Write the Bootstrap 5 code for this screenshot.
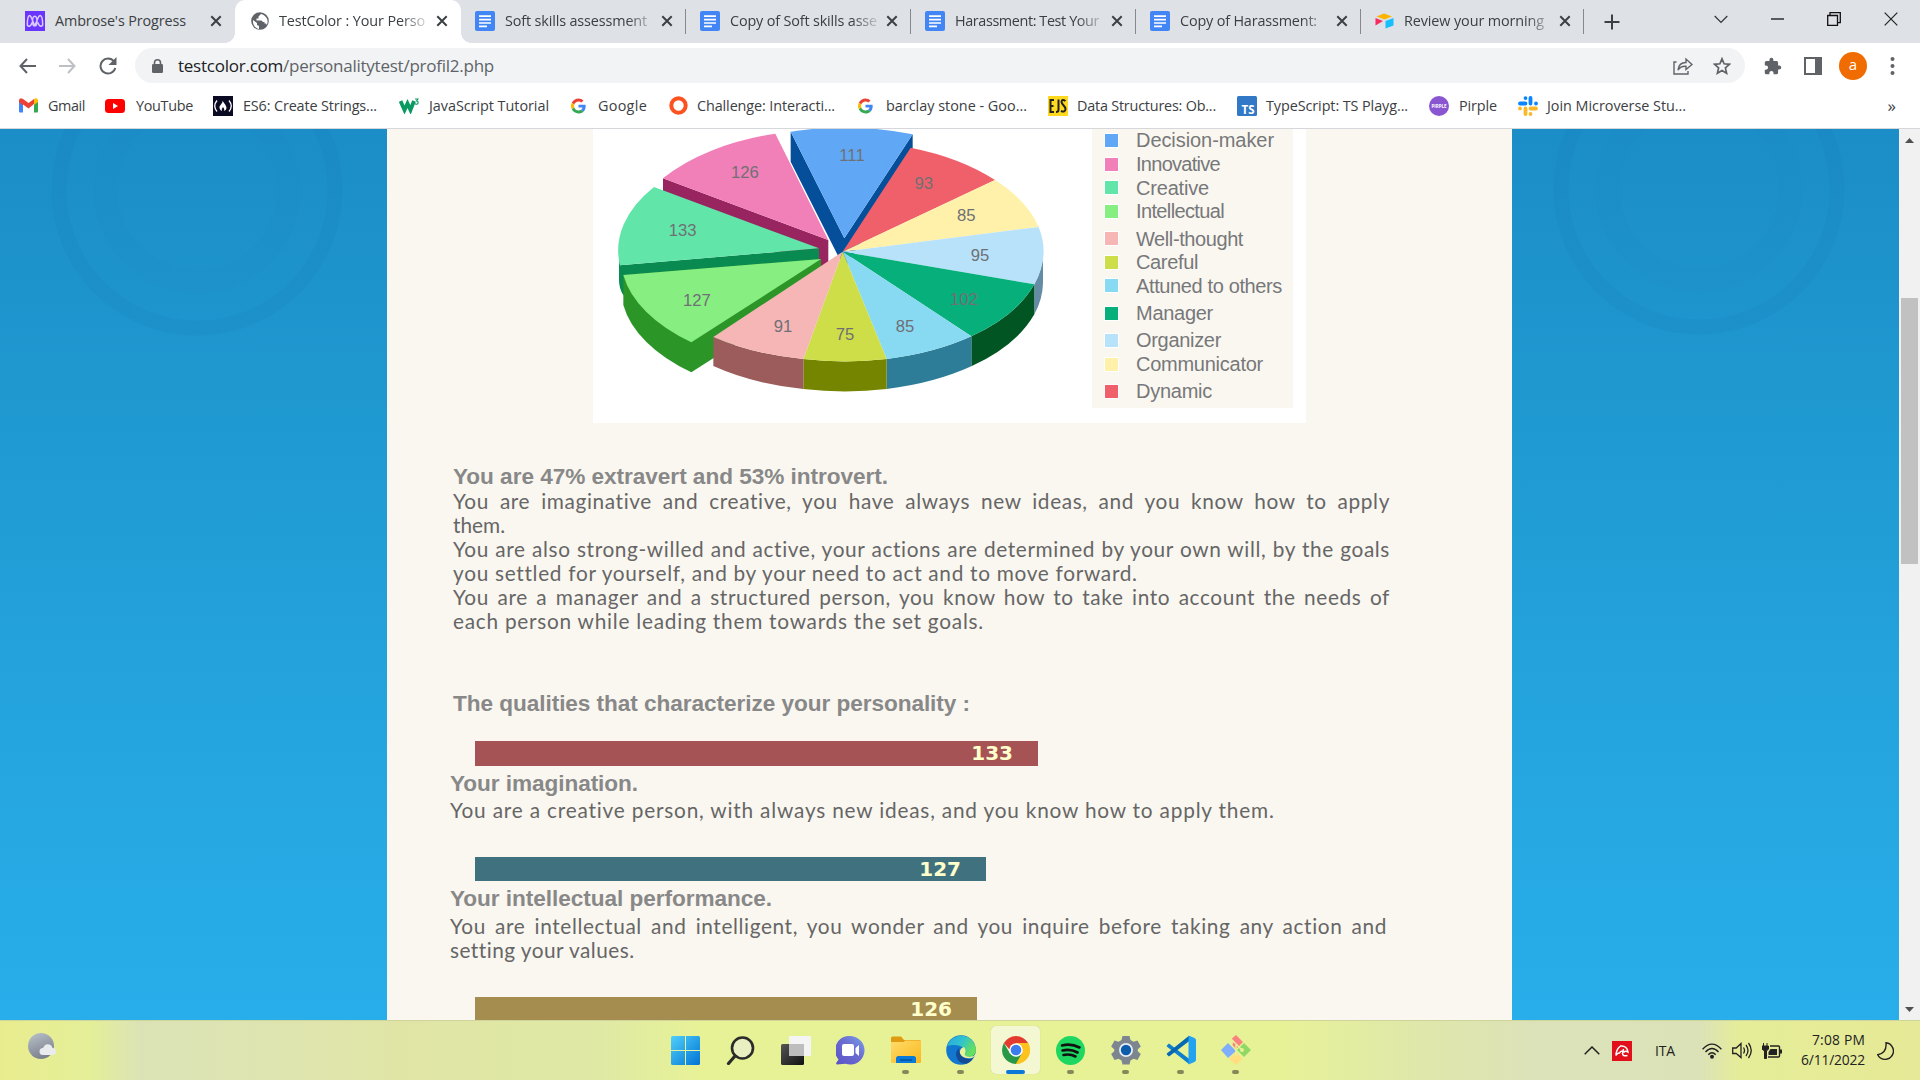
<!DOCTYPE html>
<html lang="en">
<head>
<meta charset="utf-8">
<title>TestColor : Your Personality</title>
<link href="https://cdn.jsdelivr.net/npm/bootstrap@5.3.0/dist/css/bootstrap.min.css" rel="stylesheet">
<style>
html,body{height:100%;overflow:hidden}
body{font-family:"Segoe UI","Open Sans",sans-serif;font-size:14.4px;color:#3c4043;line-height:20px}
svg{display:block;flex:none}
[data-fit]{white-space:nowrap;display:inline-block}
.tabstrip{height:43px;background:#dee1e6}
.tab{height:43px;padding:0 13px 1px 14px;width:225px;flex:none;position:relative}
.tab .ttl{flex:1;white-space:nowrap;margin-left:10px}
.tab .fade-end{-webkit-mask-image:linear-gradient(90deg,#000 122px,rgba(0,0,0,.15) 148px)}
.tab.first{width:235px;padding-left:25px}
.tab.last{width:223px}
.tab.sep::after{content:"";position:absolute;right:0;top:9px;height:25px;width:1px;background:#85898f}
.tab.active{background:#fff;border-radius:10px 10px 0 0;width:226px;padding-left:16px}
.tab.active::before,.tab.active::after{content:"";position:absolute;bottom:0;width:10px;height:10px}
.tab.active::before{left:-10px;background:radial-gradient(circle at 0 0,transparent 9.5px,#fff 10px)}
.tab.active::after{right:-10px;background:radial-gradient(circle at 100% 0,transparent 9.5px,#fff 10px)}
.toolbar{height:45px}
.omni{height:35px;background:#f1f3f4;border-radius:18px;margin-left:18px;width:1610px;padding:0 13px 0 17px;flex:none;font-size:17px;color:#5f6368}
.omni b{font-weight:400;color:#202124}
.avatar{width:28px;height:28px;border-radius:50%;background:#f06c00;color:#fff;font-size:15px}
.bookmarks{height:41px;border-bottom:1px solid #d5d7da;padding-left:19px;padding-bottom:5px}
.bm{flex:none}
.viewport{height:891px}
.sky{background:
 radial-gradient(circle at 197px 61px,transparent 79px,rgba(20,120,180,.06) 80px,rgba(20,120,180,.06) 103px,transparent 104px),
 radial-gradient(circle at 197px 61px,transparent 130px,rgba(20,120,180,.15) 131px,rgba(20,120,180,.15) 145px,transparent 146px),
 radial-gradient(circle at 1699px 60px,transparent 79px,rgba(20,120,180,.06) 80px,rgba(20,120,180,.06) 103px,transparent 104px),
 radial-gradient(circle at 1699px 60px,transparent 130px,rgba(20,120,180,.15) 131px,rgba(20,120,180,.15) 145px,transparent 146px),
 linear-gradient(#1b8dc7,#1f98d0 30%,#25a6e0 72%,#28aeea)}
.sheet{width:1125px;margin-left:387px;background:#faf7f0;height:891px;overflow:hidden}
.chart{width:713px;height:294px;margin-left:206px;background:#fff}
.chart text{font-family:"Liberation Sans",sans-serif;font-size:50px;fill:#6f7075;text-anchor:middle}
.legend{width:201px;height:279px;background:#faf7f0;margin-right:13px;padding-left:12px;font:20px/24px "Liberation Sans",sans-serif;color:#77787a}
.legend div{height:23.7px}
.legend div:first-child{margin-top:-.5px}
.legend i{width:15px;height:15px;border:1px solid #fff;margin-right:17px;flex:none}
.legend .gap{margin-top:3.5px}
.hd{font:bold 22.6px/27px "Liberation Sans",sans-serif;color:#888;margin:0;height:26px}
.txt{font-family:"Century Gothic","Lato",sans-serif;font-size:20.8px;line-height:24px;color:#666;font-weight:400}
.txt span{display:block;height:24px;white-space:nowrap;width:max-content}
.txt .just{width:auto;text-align:justify;text-align-last:justify;letter-spacing:.62px}
.meter{margin-left:25px;font:bold 20px/25px "DejaVu Sans",sans-serif;color:#ffc;padding-right:25px;text-align:right}
.track{width:21px;background:#f1f1f1}
.thumb{width:17px;height:266px;background:#c1c1c1}
.taskbar{height:60px;border-top:1px solid #cfd49b;color:#222;background:linear-gradient(90deg,#e9ec8e 0,#e4ef98 90px,#dbe3b6 140px,#dee4b2 240px,#e0e5a6 400px,#dfe9a4 600px,#e7f297 700px,#e7f297 1280px,#dfe7aa 1420px,#dce2b9 1540px,#dce2b8 1700px,#e5ed98 1740px,#e6e997 1920px)}
.app{width:49px;height:48px;border-radius:5px;position:relative;margin-right:6px}
.app.run::after{content:"";position:absolute;bottom:0;left:21px;width:7px;height:4px;border-radius:2px;background:#85895a}
.app.on{background:#f4f8d2;box-shadow:0 0 1px #b9bd90}
.app.on::after{left:15px;width:19px;background:#0a78d6}
</style>
<script src="https://cdn.jsdelivr.net/npm/bootstrap@5.3.0/dist/js/bootstrap.bundle.min.js"></script>
</head>
<body>
<svg width="0" height="0" class="position-absolute">
<defs>
<symbol id="doc" viewBox="0 0 20 20"><rect width="20" height="20" rx="2" fill="#4285f4"/><path d="M4 5.2h12M4 8.6h12M4 12h12M4 15.4h8" stroke="#fff" stroke-width="1.7"/></symbol>
<symbol id="x" viewBox="0 0 12 12"><path d="M1.3 1.3l9.4 9.4M10.7 1.3l-9.4 9.4" stroke="#3c4043" stroke-width="2"/></symbol>
<symbol id="goo" viewBox="0 0 48 48"><path fill="#ea4335" d="M24 9.5c3.54 0 6.71 1.22 9.21 3.6l6.85-6.85C35.9 2.38 30.47 0 24 0 14.62 0 6.51 5.38 2.56 13.22l7.98 6.19C12.43 13.72 17.74 9.5 24 9.5z"/><path fill="#4285f4" d="M46.98 24.55c0-1.57-.15-3.09-.38-4.55H24v9.02h12.94c-.58 2.96-2.26 5.48-4.78 7.18l7.73 6c4.51-4.18 7.09-10.36 7.09-17.65z"/><path fill="#fbbc05" d="M10.53 28.59a14.5 14.5 0 0 1 0-9.18l-7.98-6.19a24 24 0 0 0 0 21.56z"/><path fill="#34a853" d="M24 48c6.48 0 11.93-2.13 15.89-5.81l-7.73-6c-2.15 1.45-4.92 2.3-8.16 2.3-6.26 0-11.57-4.22-13.47-9.91l-7.98 6.19C6.51 42.62 14.62 48 24 48z"/></symbol>
<linearGradient id="gw" x2="1" y2="1"><stop stop-color="#4fd0fb"/><stop offset="1" stop-color="#0273d4"/></linearGradient>
<linearGradient id="gb" x2="1" y2="1"><stop stop-color="#555"/><stop offset="1" stop-color="#111"/></linearGradient>
<linearGradient id="gc" x1="1" y1="0" x2="0" y2="1"><stop stop-color="#7ba2ea"/><stop offset=".45" stop-color="#6a6cd0"/><stop offset="1" stop-color="#5b50c8"/></linearGradient>
<linearGradient id="gf" x2="1" y2="1"><stop stop-color="#ffdb6b"/><stop offset="1" stop-color="#fbb81c"/></linearGradient>
<linearGradient id="ge" x2="1" y2=".5"><stop stop-color="#27a6e0"/><stop offset=".5" stop-color="#2fc2d0"/><stop offset="1" stop-color="#66e05a"/></linearGradient>
<linearGradient id="gm" x1=".3" x2=".7" y2="1"><stop stop-color="#b4bcc5"/><stop offset="1" stop-color="#767c88"/></linearGradient>
</defs></svg>

<!-- Tab strip -->
<header class="tabstrip d-flex align-items-center">
<div class="tab first d-flex align-items-center"><svg width="20" height="20" viewBox="0 0 20 20"><rect width="20" height="20" fill="#6a35ff"/><path d="M2.300 14.500C2.300 3 5 3 6.500 7l2.500 6c1.500 3.500 3 1 3-2.500 0-7-4.500-7-4.500 0 0 3.500 1.500 6 3 2.500l2.500-6c1.500-4 4.700-4 4.700 7.500M2.300 14c1.500 2.500 4 1 4.700-2.500M17.700 14c-1.500 2.500-4 1-4.700-2.500" fill="none" stroke="#d9c9ff" stroke-width="1.500"/></svg><span class="ttl"><span data-fit="131">Ambrose's Progress</span></span><svg width="12" height="12"><use href="#x"/></svg></div>
<div class="tab active d-flex align-items-center"><svg width="18" height="18" viewBox="0 0 18 18"><circle cx="9" cy="9" r="8.800" fill="#5f6368"/><path d="M2 8l4 3v2l2 1v3C4 16 1.500 13 2 8zM9.500 2.500l-2 2v2H5.500v2h5l1.500 1.500h1.500v1.500h1.500l.8 1.500c2-4 .5-9-5.800-11z" fill="#fff"/></svg><span class="ttl fade-end"><span data-fit="146">TestColor : Your Perso</span></span><svg width="12" height="12"><use href="#x"/></svg></div>
<div class="tab sep d-flex align-items-center"><svg width="20" height="20"><use href="#doc"/></svg><span class="ttl fade-end"><span data-fit="142">Soft skills assessment</span></span><svg width="12" height="12"><use href="#x"/></svg></div>
<div class="tab sep d-flex align-items-center"><svg width="20" height="20"><use href="#doc"/></svg><span class="ttl fade-end"><span data-fit="147">Copy of Soft skills asse</span></span><svg width="12" height="12"><use href="#x"/></svg></div>
<div class="tab sep d-flex align-items-center"><svg width="20" height="20"><use href="#doc"/></svg><span class="ttl fade-end"><span data-fit="144">Harassment: Test Your</span></span><svg width="12" height="12"><use href="#x"/></svg></div>
<div class="tab sep d-flex align-items-center"><svg width="20" height="20"><use href="#doc"/></svg><span class="ttl fade-end"><span data-fit="137">Copy of Harassment:</span></span><svg width="12" height="12"><use href="#x"/></svg></div>
<div class="tab sep last d-flex align-items-center"><svg width="19" height="16" viewBox="0 0 19 16"><path d="M1.500 3.500L9 .5l8 3L9.500 6.500z" fill="#fcb400"/><path d="M10.500 8L18.500 5v7.500l-8 3z" fill="#18bfff"/><path d="M.5 5l7.500 3-7.500 4.500z" fill="#f82b60"/></svg><span class="ttl fade-end"><span data-fit="140">Review your morning</span></span><svg width="12" height="12"><use href="#x"/></svg></div>
<svg style="margin-left:20px" width="16" height="16" viewBox="0 0 16 16"><path d="M8 .5v15M.5 8h15" stroke="#3c4043" stroke-width="2"/></svg>
<div class="d-flex align-items-center ms-auto" style="gap:43px;padding-right:22px;padding-bottom:5px"><svg width="14" height="9" viewBox="0 0 14 9"><path d="M.7 1L7 7.500 13.300 1" fill="none" stroke="#333" stroke-width="1.200"/></svg><svg width="13" height="2"><path d="M0 1h13" stroke="#111" stroke-width="1.300"/></svg><svg width="14" height="14" viewBox="0 0 14 14"><path d="M.7 3.500h9.800v9.800H.7zM3 3V.7h10.300v10H11" fill="none" stroke="#111" stroke-width="1.300"/></svg><svg width="14" height="14" viewBox="0 0 14 14"><path d="M.7.7l12.600 12.600M13.300.7L.7 13.300" stroke="#222" stroke-width="1.200"/></svg></div>
</header>

<!-- Address bar -->
<nav class="toolbar d-flex align-items-center bg-white">
<svg style="margin-left:19px" width="17" height="16" viewBox="0 0 17 16"><path d="M8 1L1.500 8 8 15M1.500 8H17" fill="none" stroke="#5f6368" stroke-width="2"/></svg>
<svg style="margin-left:23px" width="17" height="16" viewBox="0 0 17 16"><path d="M9 1l6.500 7L9 15M15.500 8H0" fill="none" stroke="#bdc0c4" stroke-width="2"/></svg>
<svg style="margin-left:23px" width="18" height="18" viewBox="0 0 18 18"><path d="M15 4.500A7.500 7.500 0 1 0 16.300 11" fill="none" stroke="#5f6368" stroke-width="2"/><path d="M17.500 0v8h-8z" fill="#5f6368"/></svg>
<div class="omni d-flex align-items-center"><svg width="11" height="14" viewBox="0 0 11 14"><rect y="5" width="11" height="9" rx="1.200" fill="#5f6368"/><path d="M2.500 6V3.800a3 3 0 0 1 6 0V6" fill="none" stroke="#5f6368" stroke-width="1.600"/></svg><span data-fit="316" style="margin-left:15px"><b>testcolor.com</b>/personalitytest/profil2.php</span>
<svg class="ms-auto" width="20" height="18" viewBox="0 0 20 18"><path d="M3.500 5H1v12h14v-3M5 13c.5-5 3-7.500 8-7.500V2l6 5.500-6 5V9.300C9.500 9 7 10 5 13z" fill="none" stroke="#5f6368" stroke-width="1.400"/></svg>
<svg style="margin-left:20px;margin-right:1px" width="18" height="18" viewBox="0 0 18 18"><path d="M9 1.800l2.100 5 5.400.5-4.100 3.600 1.200 5.300L9 13.400l-4.600 2.800 1.200-5.300L1.500 7.300l5.400-.5z" fill="none" stroke="#5f6368" stroke-width="1.700"/></svg></div>
<svg style="margin-left:19px" width="18" height="18" viewBox="1 0 23 23"><path d="M20.500 11H19V7a2 2 0 0 0-2-2h-4V3.500a2.500 2.500 0 0 0-5 0V5H4a2 2 0 0 0-2 2v3.800h1.500a2.700 2.700 0 0 1 0 5.400H2V20a2 2 0 0 0 2 2h3.800v-1.500a2.700 2.700 0 0 1 5.400 0V22H17a2 2 0 0 0 2-2v-4h1.500a2.500 2.500 0 0 0 0-5z" fill="#5f6368"/></svg>
<svg style="margin-left:22px" width="18" height="18" viewBox="0 0 18 18"><path d="M1 1h16v16H1z" fill="none" stroke="#5f6368" stroke-width="2"/><path d="M11 0h6v18h-6z" fill="#5f6368"/></svg>
<span class="avatar d-flex align-items-center justify-content-center pb-1" style="margin-left:17px">a</span>
<svg style="margin-left:23px" width="5" height="20" viewBox="0 0 5 20"><g fill="#5f6368"><circle cx="2.500" cy="3" r="2"/><circle cx="2.500" cy="10" r="2"/><circle cx="2.500" cy="17" r="2"/></g></svg>
</nav>

<!-- Bookmarks -->
<nav class="bookmarks bg-white d-flex align-items-center">
<svg width="19" height="15" viewBox="0 0 19 15"><path d="M0 2v11.500q0 1 1 1h3V6z" fill="#4285f4"/><path d="M19 2v11.500q0 1-1 1h-3V6z" fill="#34a853"/><path d="M0 2Q1-1 4 1l5.500 4L15 1v5L9.500 10.500 4 6.500v1L0 4z" fill="#ea4335"/><path d="M15 1q3-2 4 1v2l-4 3z" fill="#fbbc04"/></svg><span class="bm" style="margin-left:10px" data-fit="37">Gmail</span>
<svg style="margin-left:20px" width="20" height="14" viewBox="0 0 20 14"><rect width="20" height="14" rx="3.500" fill="#f00"/><path d="M8 4v6l5-3z" fill="#fff"/></svg><span class="bm" style="margin-left:11px" data-fit="57">YouTube</span>
<svg style="margin-left:20px" width="20" height="20" viewBox="0 0 20 20"><path d="M0 0h20v20H0z" fill="#0a0a23"/><path d="M4 4.500Q-.5 10 4 15.500M16 4.500q4.500 5.500 0 11" fill="none" stroke="#fff" stroke-width="1.300"/><path d="M9.500 4.500C10 8 6 9 6.500 12q.5 2.500 2.500 3-1-2 1-4 2 2 1 4 2.500-1 2.500-3c0-3-3-5-4-7.500z" fill="#fff"/></svg><span class="bm" style="margin-left:10px" data-fit="134">ES6: Create Strings...</span>
<svg style="margin-left:22px" width="20" height="16" viewBox="0 0 20 16"><path d="M1.500 3l4 9 3-6.500 3 6.500 3.500-9" fill="none" stroke="#0a9a61" stroke-width="3.800"/><path d="M16 1h3l-1.500 2q2 0 1.500 2t-3 .8" fill="none" stroke="#0a9a61" stroke-width="1.100"/></svg><span class="bm" style="margin-left:10px" data-fit="120">JavaScript Tutorial</span>
<svg style="margin-left:22px" width="15" height="16"><use href="#goo"/></svg><span class="bm" style="margin-left:12px" data-fit="49">Google</span>
<svg style="margin-left:22px" width="19" height="19" viewBox="0 0 19 19"><circle cx="9.500" cy="9.500" r="7.200" fill="none" stroke="#fc5221" stroke-width="4"/></svg><span class="bm" style="margin-left:9px" data-fit="138">Challenge: Interacti...</span>
<svg style="margin-left:23px" width="15" height="16"><use href="#goo"/></svg><span class="bm" style="margin-left:13px" data-fit="141">barclay stone - Goo...</span>
<svg style="margin-left:21px" width="20" height="20" viewBox="0 0 20 20"><path d="M0 0h20v20H0z" fill="#ffd91d"/><path d="M6 4H2.500v12H6M2.500 10h3M10.500 3.500V14q0 2-2.500 2M17.500 5q-3.500-2.500-4 .8c0 3 4 4 4 7.200 0 3-2.500 3-4.500 1.800" fill="none" stroke="#222" stroke-width="2"/></svg><span class="bm" style="margin-left:9px" data-fit="139">Data Structures: Ob...</span>
<svg style="margin-left:21px" width="20" height="20" viewBox="0 0 20 20"><rect width="20" height="20" rx="1.500" fill="#3178c6"/><text x="4.500" y="17.500" font-family="Open Sans" font-weight="700" font-size="11.500" fill="#fff">TS</text></svg><span class="bm" style="margin-left:9px" data-fit="142">TypeScript: TS Playg...</span>
<svg style="margin-left:21px" width="20" height="20" viewBox="0 0 20 20"><circle cx="10" cy="10" r="10" fill="#8a55d0"/><text x="10" y="11.700" text-anchor="middle" font-family="Open Sans" font-weight="700" font-size="4.500" fill="#fff">PIRPLE</text></svg><span class="bm" style="margin-left:10px" data-fit="38">Pirple</span>
<svg style="margin-left:21px" width="20" height="20" viewBox="0 0 20 20"><g fill="none" stroke-width="3.800" stroke-linecap="round"><path d="M7.500 2.100v0M2 7.500h5.500M12.500 2v5.500M18 7.500v0" stroke="#0a84ff"/><path d="M2 12.500v0M7.500 12.500V18M12.500 12.500H18M12.500 18v0" stroke="#fbb828"/></g></svg><span class="bm" style="margin-left:9px" data-fit="139">Join Microverse Stu...</span>
<span class="ms-auto" style="margin-right:24px;font-size:17px">»</span>
</nav>

<!-- Page -->
<main class="viewport d-flex">
<div class="sky flex-grow-1">
<div class="sheet">
<div class="chart d-flex">
<svg width="499" height="294" viewBox="39 27 1497 882">
<path d="M249 175L745 360v90L249 265z" fill="#98255f"/><path d="M745 360L249 175A600 332 0 0 1 586 41z" fill="#f280b8"/>
<path d="M632 35L793 355 998 43V133L793 445 632 125z" fill="#054e9a"/><path d="M793 355L632 35A600 332 0 0 1 998 43z" fill="#60a8f5"/>
<path d="M117 390Q117 415 120 436L717 385v90L130 526Q117 505 117 480z" fill="#088a50"/><path d="M717 385L120 436A600 332 0 0 1 222 201z" fill="#62e5a9"/>
<path d="M130 465L723 417v90L334 757A600 332 0 0 1 130 555z" fill="#2c9528"/><path d="M723 417L334 667A600 332 0 0 1 130 465z" fill="#87ee82"/>
<path d="M1389 395A600 332 0 0 1 1363 493v90A600 332 0 0 0 1389 490z" fill="#648ca4"/><path d="M1363 493A600 332 0 0 1 1174 649v90A600 332 0 0 0 1363 583z" fill="#005522"/><path d="M1174 649A600 332 0 0 1 920 717v90A600 332 0 0 0 1174 739z" fill="#2d7d98"/><path d="M920 717A600 332 0 0 1 670 717v90A600 332 0 0 0 920 807z" fill="#758500"/><path d="M670 717A600 332 0 0 1 400 651v87A600 332 0 0 0 670 807z" fill="#9c5c5b"/>
<path d="M788 395L992 83A600 332 0 0 1 1245 180z" fill="#f0606a"/><path d="M788 395L1245 180A600 332 0 0 1 1376 321z" fill="#fff0aa"/><path d="M788 395L1376 321A600 332 0 0 1 1363 493z" fill="#b8e2f9"/><path d="M788 395L1363 493A600 332 0 0 1 1174 649z" fill="#07b07b"/><path d="M788 395L1174 649A600 332 0 0 1 920 717z" fill="#88d9f2"/><path d="M788 395L920 717A600 332 0 0 1 670 717z" fill="#cede48"/><path d="M788 395L670 717A600 332 0 0 1 400 651z" fill="#f6b6b6"/>
<text x="816" y="123">111</text><text x="495" y="175">126</text><text x="308" y="347">133</text><text x="351" y="557">127</text><text x="609" y="635">91</text><text x="795" y="661">75</text><text x="975" y="635">85</text><text x="1152" y="554">102</text><text x="1200" y="422">95</text><text x="1159" y="303">85</text><text x="1031" y="206">93</text>
</svg>
<div class="legend">
<div class="d-flex align-items-center"><i style="background:#60a8f5"></i><span data-fit="138">Decision-maker</span></div>
<div class="d-flex align-items-center"><i style="background:#f280b8"></i><span data-fit="84">Innovative</span></div>
<div class="d-flex align-items-center"><i style="background:#62e5a9"></i><span data-fit="73">Creative</span></div>
<div class="d-flex align-items-center"><i style="background:#87ee82"></i><span data-fit="88">Intellectual</span></div>
<div class="d-flex align-items-center gap"><i style="background:#f6b6b6"></i><span data-fit="107">Well-thought</span></div>
<div class="d-flex align-items-center"><i style="background:#cede48"></i><span data-fit="62">Careful</span></div>
<div class="d-flex align-items-center"><i style="background:#88d9f2"></i><span data-fit="146">Attuned to others</span></div>
<div class="d-flex align-items-center gap"><i style="background:#07b07b"></i><span data-fit="77">Manager</span></div>
<div class="d-flex align-items-center gap"><i style="background:#b8e2f9"></i><span data-fit="85">Organizer</span></div>
<div class="d-flex align-items-center"><i style="background:#fff0aa"></i><span data-fit="127">Communicator</span></div>
<div class="d-flex align-items-center gap"><i style="background:#f0606a"></i><span data-fit="76">Dynamic</span></div>
</div>
</div>
<section style="margin:40px 122px 0 66px">
<h1 class="hd"><span data-fit="435">You are 47% extravert and 53% introvert.</span></h1>
<div class="txt"><span class="just">You are imaginative and creative, you have always new ideas, and you know how to apply</span><span>them.</span><span class="just">You are also strong-willed and active, your actions are determined by your own will, by the goals</span><span data-fit="684">you settled for yourself, and by your need to act and to move forward.</span><span class="just">You are a manager and a structured person, you know how to take into account the needs of</span><span data-fit="531">each person while leading them towards the set goals.</span></div>
<h2 class="hd" style="margin-top:57px"><span data-fit="517">The qualities that characterize your personality :</span></h2>
</section>
<section style="margin:25px 125px 0 63px">
<div class="meter" style="width:563px;height:25px;background:#a65355">133</div>
<h3 class="hd" style="margin-top:4px"><span data-fit="188">Your imagination.</span></h3>
<div class="txt" style="margin-top:2px"><span data-fit="825">You are a creative person, with always new ideas, and you know how to apply them.</span></div>
<div class="meter" style="margin-top:35px;width:511px;height:24px;background:#3f717f">127</div>
<h3 class="hd" style="margin-top:4px"><span data-fit="322">Your intellectual performance.</span></h3>
<div class="txt" style="margin-top:3px"><span class="just">You are intellectual and intelligent, you wonder and you inquire before taking any action and</span><span data-fit="184">setting your values.</span></div>
<div class="meter" style="margin-top:35px;width:502px;height:25px;background:#a48d4f">126</div>
</section>
</div>
</div>
<aside class="track d-flex flex-column align-items-center"><svg style="margin-top:9px;margin-bottom:155px" width="9" height="5"><path d="M0 5L4.500 0 9 5z" fill="#505050"/></svg><div class="thumb"></div><svg class="mt-auto" style="margin-bottom:8px" width="9" height="5"><path d="M0 0L4.500 5 9 0z" fill="#505050"/></svg></aside>
</main>

<!-- Taskbar -->
<footer class="taskbar d-flex align-items-center">
<svg style="margin-left:28px;margin-bottom:10px" width="28" height="26" viewBox="0 0 28 26"><circle cx="13" cy="13" r="13" fill="url(#gm)"/><path d="M15 22a3.500 3.500 0 0 1 0-7q2-5 6.500-3.500 2.500.5 3 3.500a3.500 3.500 0 0 1 0 7z" fill="#e9ebee"/></svg>
<div class="d-flex align-items-center" style="margin-left:605px;margin-bottom:1px">
<div class="app d-flex align-items-center justify-content-center"><svg width="29" height="29" viewBox="0 0 29 29"><path d="M1.500 0H14v14H0V1.500Q0 0 1.500 0zM15 0h12.500Q29 0 29 1.500V14H15zM0 15h14v14H1.500Q0 29 0 27.500zM15 15h14v12.500q0 1.500-1.500 1.500H15z" fill="url(#gw)"/></svg></div>
<div class="app d-flex align-items-center justify-content-center"><svg width="29" height="29" viewBox="0 0 29 29"><circle cx="16.500" cy="12" r="10.500" fill="#e9efc0" stroke="#2b2b2b" stroke-width="2.600"/><path d="M9 20l-6.500 7.500" stroke="#2b2b2b" stroke-width="3.200" stroke-linecap="round"/></svg></div>
<div class="app d-flex align-items-center justify-content-center"><svg width="30" height="29" viewBox="0 0 30 29"><rect y="8" width="23" height="21" rx="1.500" fill="url(#gb)"/><rect x="8" width="22" height="20" rx="1.500" fill="#f4f4f4"/><path d="M8 8h15v12H8z" fill="#bdbdbd"/></svg></div>
<div class="app d-flex align-items-center justify-content-center"><svg width="29" height="29" viewBox="0 0 29 29"><path d="M14.500 0a14.300 14.300 0 1 1-5 27.800L1 28.500q-1.500-.5-.5-2l2-3A14.300 14.300 0 0 1 14.500 0z" fill="url(#gc)"/><rect x="6" y="8" width="12" height="12" rx="2" fill="#fff"/><path d="M19.500 12l3.500-3v11l-3.500-3z" fill="#fff"/></svg></div>
<div class="app run d-flex align-items-center justify-content-center"><svg width="30" height="28" viewBox="0 0 30 28"><path d="M0 2Q0 .5 1.500.5H10l3 3.500H28q2 0 2 2v4H0z" fill="#e09b10"/><path d="M0 6h13l1-1.500h14.500q1.500 0 1.500 1.500v20q0 1-1 1H1q-1 0-1-1z" fill="url(#gf)"/><path d="M5 27v-4.500Q5 20 7.500 20h15q2.500 0 2.500 2.500V27z" fill="#0a7ad8"/><path d="M9 24h12" stroke="#064a96" stroke-width="1.300"/></svg></div>
<div class="app run d-flex align-items-center justify-content-center"><svg width="30" height="30" viewBox="0 0 30 30"><circle cx="15" cy="15" r="14.800" fill="#1277ce"/><path d="M1 11A14.800 14.800 0 0 1 29.800 14c.5 6-4 8.500-9 7.500-3-.6-2-2-1.500-3.500C20 12 12 8 1 11z" fill="url(#ge)"/><path d="M13 13c-6 5-2 17 8 15.500q4-1.500 6.500-6C22 25.500 13 23 13 13z" fill="#134b96"/><path d="M18 12q-5 1.500-4 6.500 3 6 12 4.500l4-3v-1q-3 3.500-8 2.500-4-.5-3-3 1.500-3-1-6.500z" fill="#e9f299"/></svg></div>
<div class="app run on d-flex align-items-center justify-content-center"><svg width="28" height="28" viewBox="0 0 28 28"><path d="M14 14L1.900 7A14 14 0 0 1 26.100 7z" fill="#e33b2e"/><path d="M14 14V7h12.100A14 14 0 0 1 14 28z" fill="#fcc31e"/><path d="M1.900 7A14 14 0 0 0 14 28l6-10.500L14 14 8 17.500z" fill="#289847"/><path d="M14 14H8L1.900 7h12z" fill="#e33b2e"/><path d="M14 28l6-10.500L14 14h6V7h6.100A14 14 0 0 1 14 28z" fill="#fcc31e"/><circle cx="14" cy="14" r="6.800" fill="#fff"/><circle cx="14" cy="14" r="5.300" fill="#3b7ded"/></svg></div>
<div class="app run d-flex align-items-center justify-content-center"><svg width="29" height="29" viewBox="0 0 29 29"><circle cx="14.500" cy="14.500" r="14.500" fill="#1ed760"/><path d="M6 9.500q9-2.500 17.500 2M6.500 14.500q8-2 15 2M7.500 19q6.500-1.500 12 1.500" fill="none" stroke="#111" stroke-width="2.600" stroke-linecap="round"/></svg></div>
<div class="app run d-flex align-items-center justify-content-center"><svg width="30" height="30" viewBox="0 0 30 30"><path d="M11.500 1h7l1 4 3 1.700 4-1.200 3.300 6-3 2.700v2l3 2.700-3.300 6-4-1.200-3 1.800-1 4h-7l-1-4-3-1.800-4 1.200-3.300-6 3-2.700v-2l-3-2.700 3.300-6 4 1.200 3-1.700z" fill="#7d858f"/><circle cx="15" cy="15" r="7" fill="#e8eef4"/><circle cx="15" cy="15" r="5.200" fill="#0b5cab"/></svg></div>
<div class="app run d-flex align-items-center justify-content-center"><svg width="30" height="30" viewBox="0 0 30 30"><path d="M.8 10.500L3 8.500l20 15.300V29L.8 11.500z" fill="#0e7fcb"/><path d="M.8 19.500L3 21.500 23 6.200V.8L.8 18.500z" fill="#0668b3"/><path d="M22.500.5L28.500 3q1.500.8 1.500 2v20q0 1.200-1.500 2l-6 2.500z" fill="#23a2f2"/></svg></div>
<div class="app run d-flex align-items-center justify-content-center"><svg width="30" height="30" viewBox="0 0 30 30"><path d="M15 0l7 7-7 7-3.500-4 1-4-2-2z" fill="#fb8080"/><path d="M7 8l8 8-8 7-7-8z" fill="#7eaefc"/><path d="M23 8l7 7-7 7-7-7z" fill="#90d765"/><path d="M15 17l7 7-7 6-7-6z" fill="#ffdf80"/><path d="M10 4l11 11M15 10v11" stroke="#e7f297" stroke-width="1.500"/><circle cx="21" cy="15" r="2" fill="#e7f297"/></svg></div>
</div>
<div class="d-flex align-items-center ms-auto" style="padding-right:26px">
<svg width="16" height="9" viewBox="0 0 16 9"><path d="M.7 8.300L8 1l7.300 7.300" fill="none" stroke="#222" stroke-width="1.500"/></svg>
<svg style="margin-left:12px" width="20" height="20" viewBox="0 0 20 20"><path d="M0 0h20v20H0z" fill="#e2101a"/><path d="M4 14.500q0-6 4.500-9.500Q15 4.500 16 11q-2.500-1.500-4 0-3-2-4.500 1-2-.5-3.500 2.500zM11.500 8l-1 4.500q0 3 5 2" fill="none" stroke="#fff" stroke-width="1.500"/></svg>
<span data-fit="20" style="margin-left:23px;font-size:14px">ITA</span>
<svg style="margin-left:27px" width="20" height="16" viewBox="0 0 20 16"><g fill="none" stroke="#222" stroke-width="1.400"><path d="M.6 6.200Q10-4 19.400 6.200M3.500 9Q10 2 16.500 9M6.300 11.700q3.700-4 7.400 0"/></g><circle cx="10" cy="13.700" r="2" fill="#222"/></svg>
<svg style="margin-left:10px" width="20" height="17" viewBox="0 0 20 17"><path d="M.7 6h3.500L9 1.500v14L4.200 11.500H.7zM11.500 5.500q2 3 0 6M14 3q4 5.500 0 11M16.500 1q5.500 7.500 0 15" fill="none" stroke="#222" stroke-width="1.300"/></svg>
<svg style="margin-left:10px" width="20" height="16" viewBox="0 0 20 16"><path d="M1.500 0v3M5 0v3M0 3h6.500v3L4.500 8v7.500h-2V8L0 6z" fill="#222" stroke="#222"/><path d="M8 3h8.500q1 0 1 1v9q0 1-1 1H6" fill="none" stroke="#222" stroke-width="1.400"/><path d="M8.500 6H15v6H6.500V9zM18 6.500h2v4h-2z" fill="#222"/></svg>
<div class="text-end" style="margin-left:19px;margin-bottom:1px;width:64px;font-size:13.800px"><div><span data-fit="53">7:08 PM</span></div><div><span data-fit="64">6/11/2022</span></div></div>
<svg style="margin-left:12px" width="17" height="18" viewBox="0 0 17 18"><path d="M9 .8a8.300 8.300 0 1 1-8.300 12Q10 11 9 .8z" fill="none" stroke="#222" stroke-width="1.400"/></svg>
</div>
</footer>
<script>
// Tracks each label so that it fills its nominal width whichever font is available.
document.querySelectorAll('[data-fit]').forEach(function (el) {
  var w = el.getBoundingClientRect().width, n = el.textContent.length;
  el.style.letterSpacing = ((el.dataset.fit - w) / n).toFixed(3) + 'px';
});
</script>
</body>
</html>
